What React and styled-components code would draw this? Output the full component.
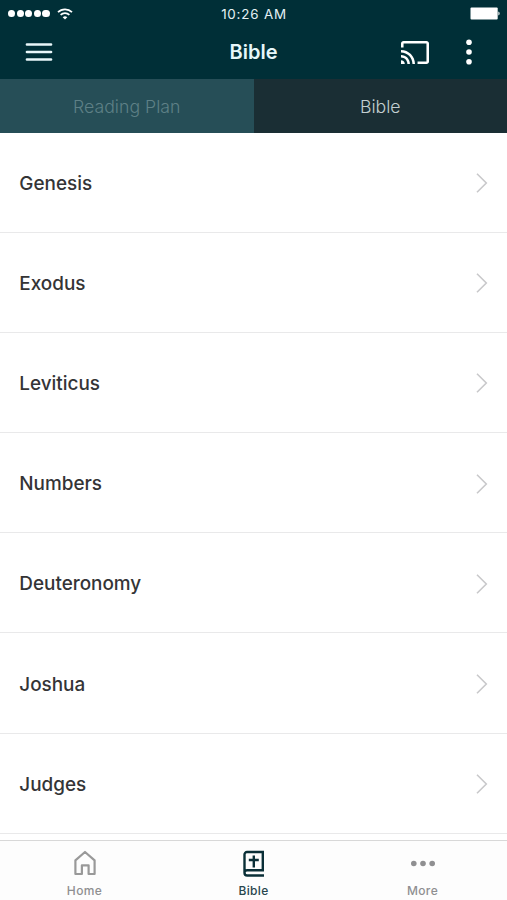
/* -------------------------------------------------------------------------- */
/*                            External Dependencies                           */
/* -------------------------------------------------------------------------- */
import React from 'react';
import styled, { createGlobalStyle } from 'styled-components';

const books = [
  'Genesis',
  'Exodus',
  'Leviticus',
  'Numbers',
  'Deuteronomy',
  'Joshua',
  'Judges',
];

/* ---------------------------------- Icons --------------------------------- */
const Wifi = () => (
  <svg width="16" height="12" viewBox="0 0 16 12" fill="none">
    <path d="M1 4.2a10 10 0 0 1 14 0" stroke="#fff" strokeWidth="1.7" />
    <path d="M3.6 6.9a6.3 6.3 0 0 1 8.8 0" stroke="#fff" strokeWidth="1.7" />
    <path d="M8 11.6 5.7 9.3a3.3 3.3 0 0 1 4.6 0z" fill="#fff" />
  </svg>
);

const Battery = () => (
  <svg width="30" height="13" viewBox="0 0 30 13" fill="#fff">
    <rect x="0.5" y="0.4" width="27.2" height="12" rx="1" />
    <path d="M28.4 4.4c1.6.6 1.6 3.4 0 4z" />
  </svg>
);

const Menu = () => (
  <svg width="28" height="20" viewBox="0 0 28 20">
    <path
      d="M2 2.5h24M2 10h24M2 17.5h24"
      stroke="#e9f7fa"
      strokeWidth="2.7"
      strokeLinecap="round"
    />
  </svg>
);

const Cast = () => (
  <svg width="28" height="23" viewBox="1 3 22 18" fill="#fff">
    <path d="M21 3H3c-1.1 0-2 .9-2 2v3h2V5h18v14h-7v2h7c1.1 0 2-.9 2-2V5c0-1.1-.9-2-2-2zM1 18v3h3c0-1.66-1.34-3-3-3zm0-4v2c2.76 0 5 2.24 5 5h2c0-3.87-3.13-7-7-7zm0-4v2c4.97 0 9 4.03 9 9h2c0-6.08-4.93-11-11-11z" />
  </svg>
);

const Kebab = () => (
  <svg width="6" height="26" viewBox="0 0 6 26" fill="#fff">
    <circle cx="3" cy="3.3" r="2.8" />
    <circle cx="3" cy="13" r="2.8" />
    <circle cx="3" cy="22.7" r="2.8" />
  </svg>
);

const Chevron = () => (
  <svg width="12" height="22" viewBox="0 0 12 22" fill="none">
    <path d="M1 1.8 10.3 11 1 20.2" stroke="#c9c9cb" strokeWidth="1.6" />
  </svg>
);

const Home = () => (
  <svg width="22" height="26" viewBox="0 0 22 26" fill="none">
    <path
      d="M1.4 10.4 11 2l9.6 8.4v13.6h-6v-8.7H7.9V24H1.4z"
      stroke="#999"
      strokeWidth="2.2"
      strokeLinejoin="round"
    />
  </svg>
);

const Book = () => (
  <svg width="22" height="28" viewBox="0 0 22 28" fill="none">
    <path
      d="M21 25.5H4.2A2.7 2.7 0 0 1 1.5 22.800V4.5A2.5 2.5 0 0 1 4 2h15.800v18.300H4.2a2.600 2.600 0 0 0-2.700 2.500"
      stroke="#0a2f37"
      strokeWidth="2.4"
    />
    <path d="M10.8 5.5v12M5.800 10h10" stroke="#0a2f37" strokeWidth="2.4" />
  </svg>
);

const Dots = () => (
  <svg width="26" height="26" viewBox="0 0 26 26" fill="#8f8f91">
    <circle cx="3.8" cy="13.5" r="2.8" />
    <circle cx="13" cy="13.5" r="2.8" />
    <circle cx="22.2" cy="13.5" r="2.8" />
  </svg>
);

/* ----------------------------------- App ---------------------------------- */
const App = () => {
  return (
    <Screen>
      <GlobalStyle />
      <StatusBar>
        <Signal>
          <Carrier>
            {[1, 2, 3, 4, 5].map((dot) => (
              <CarrierDot key={dot} />
            ))}
          </Carrier>
          <Wifi />
        </Signal>
        <Time>10:26 AM</Time>
        <Power>
          <Battery />
        </Power>
      </StatusBar>

      <Header>
        <IconButton aria-label="Open menu">
          <Menu />
        </IconButton>
        <Title>Bible</Title>
        <Actions>
          <IconButton aria-label="Cast">
            <Cast />
          </IconButton>
          <IconButton aria-label="More options">
            <Kebab />
          </IconButton>
        </Actions>
      </Header>

      <Tabs>
        <Tab>Reading Plan</Tab>
        <Tab $active>Bible</Tab>
      </Tabs>

      <BookList>
        {books.map((book) => (
          <BookRow key={book}>
            <span>{book}</span>
            <Chevron />
          </BookRow>
        ))}
      </BookList>

      <BottomNav>
        <NavItem>
          <Home />
          <NavLabel>Home</NavLabel>
        </NavItem>
        <NavItem $active>
          <Book />
          <NavLabel>Bible</NavLabel>
        </NavItem>
        <NavItem>
          <Dots />
          <NavLabel>More</NavLabel>
        </NavItem>
      </BottomNav>
    </Screen>
  );
};

/* --------------------------------- Styles --------------------------------- */
const GlobalStyle = createGlobalStyle`
  * {
    box-sizing: border-box;
  }
  body {
    margin: 0;
    background: #fff;
    font-family: Inter, 'Liberation Sans', sans-serif;
  }
  svg {
    display: block;
    flex-shrink: 0;
  }
`;

const Screen = styled.div`
  display: flex;
  flex-direction: column;
  height: 100vh;
  overflow: hidden;
`;

const StatusBar = styled.div`
  display: grid;
  grid-template-columns: 1fr auto 1fr;
  align-items: center;
  flex-shrink: 0;
  height: 27px;
  padding: 0 7px 0 8px;
  background: #002f37;
`;

const Signal = styled.div`
  display: flex;
  align-items: center;
  gap: 7px;
`;

const Carrier = styled.div`
  display: flex;
  gap: 1.4px;
`;

const CarrierDot = styled.span`
  width: 7.2px;
  height: 7.6px;
  border-radius: 50%;
  background: #fff;
`;

const Time = styled.span`
  font-size: 13.4px;
  letter-spacing: 0.8px;
  color: #e4f1f4;
`;

const Power = styled.div`
  display: flex;
  justify-content: flex-end;
`;

const Header = styled.header`
  display: grid;
  grid-template-columns: 1fr auto 1fr;
  align-items: center;
  flex-shrink: 0;
  height: 52px;
  padding: 0 35px 2px 25px;
  background: #002f37;
`;

const IconButton = styled.button`
  width: max-content;
  padding: 0;
  border: 0;
  background: none;
`;

const Title = styled.h1`
  margin: 0 0 0 10px;
  font-size: 20px;
  font-weight: 600;
  color: #e6f7fa;
`;

const Actions = styled.div`
  display: flex;
  justify-content: flex-end;
  align-items: center;
  gap: 37px;
`;

const Tabs = styled.div`
  display: grid;
  grid-template-columns: 1fr 1fr;
  flex-shrink: 0;
  height: 53.5px;
`;

const Tab = styled.button`
  padding: 1px 0 0;
  border: 0;
  font-family: inherit;
  font-size: 17.7px;
  font-weight: 300;
  color: ${({ $active }) => ($active ? '#c3ced1' : '#5e8086')};
  background: ${({ $active }) => ($active ? '#1a2e34' : '#264e57')};
`;

const BookList = styled.ul`
  flex: 1;
  min-height: 0;
  margin: 0;
  padding: 0;
  list-style: none;
`;

const BookRow = styled.li`
  display: flex;
  justify-content: space-between;
  align-items: center;
  height: 100.2px;
  padding: 2px 19.5px 0 19.3px;
  border-bottom: 1px solid #e9e9ea;
  font-size: 18.9px;
  font-weight: 500;
  color: #343436;
`;

const BottomNav = styled.nav`
  display: grid;
  grid-template-columns: repeat(3, 1fr);
  flex-shrink: 0;
  height: 60px;
  border-top: 1px solid #d8d8d8;
  background: #fdfdfd;
`;

const NavItem = styled.a`
  display: flex;
  flex-direction: column;
  align-items: center;
  justify-content: space-between;
  padding: 9px 0 1px;
  color: ${({ $active }) => ($active ? '#28464d' : '#8f8f91')};
`;

const NavLabel = styled.span`
  font-size: 12px;
  line-height: 16px;
  font-weight: 500;
  letter-spacing: 0.35px;
`;

export default App;
